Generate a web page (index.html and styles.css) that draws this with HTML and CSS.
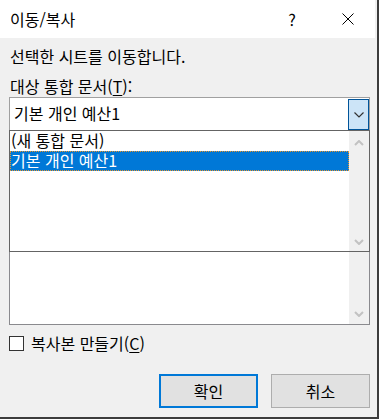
FILE: index.html
```html
<!DOCTYPE html>
<html lang="ko">
<head>
    <meta charset="UTF-8">
    <title>이동/복사</title>
    <link rel="stylesheet" href="styles.css">
</head>
<body>

    <div class="window">
        <div class="titlebar">
            <span class="title">이동/복사</span>
            <span class="help">?</span>
            <span class="close">
                <svg width="12" height="12" viewBox="0 0 12 12">
                    <path d="M0.5 0.5 L11.5 11.5 M11.5 0.5 L0.5 11.5" stroke="#000" stroke-width="1" fill="none"/>
                </svg>
            </span>
        </div>

        <div class="content">
            <p class="label">선택한 시트를 이동합니다.</p>
            <p class="label">대상 통합 문서(<u>T</u>):</p>

            <div class="combo">
                <span class="combo-text">기본 개인 예산1</span>
                <span class="combo-btn">
                    <svg width="10" height="6" viewBox="0 0 10 6">
                        <path d="M0.5 0.5 L5 5 L9.5 0.5" stroke="#333" stroke-width="1.2" fill="none"/>
                    </svg>
                </span>
            </div>

            <div class="listbox">
                <ul class="items">
                    <li>(새 통합 문서)</li>
                    <li class="selected">기본 개인 예산1</li>
                </ul>
                <div class="scrollbar">
                    <svg width="10" height="6" viewBox="0 0 10 6">
                        <path d="M1 5 L5 1 L9 5" stroke="#c2c2c2" stroke-width="2" fill="none"/>
                    </svg>
                    <svg width="10" height="6" viewBox="0 0 10 6">
                        <path d="M1 1 L5 5 L9 1" stroke="#c2c2c2" stroke-width="2" fill="none"/>
                    </svg>
                </div>
            </div>

            <div class="listbox lower">
                <ul class="items"></ul>
                <div class="scrollbar bottom-only">
                    <svg width="10" height="6" viewBox="0 0 10 6">
                        <path d="M1 1 L5 5 L9 1" stroke="#c2c2c2" stroke-width="2" fill="none"/>
                    </svg>
                </div>
            </div>

            <label class="check">
                <span class="box"></span>
                <span>복사본 만들기(<u>C</u>)</span>
            </label>

            <div class="buttons">
                <button class="default">확인</button>
                <button>취소</button>
            </div>
        </div>
    </div>

</body>
</html>
```

FILE: styles.css
```css
/* Basic reset */
* {
    margin: 0;
    padding: 0;
    box-sizing: border-box;
}

body {
    font-family: "Noto Sans CJK KR", "Noto Sans", sans-serif;
    font-size: 16px;
    color: #000;
    background: #3c3c3c;
    width: 379px;
    height: 419px;
    overflow: hidden;
}

.window {
    width: 377px;
    height: 417px;
    background-color: #f0f0f0;
}

/* Title bar */
.titlebar {
    height: 38px;
    background-color: #fff;
    display: flex;
    align-items: center;
    padding-left: 10px;
    margin-right: 2px;
}

.title {
    flex: 1;
    line-height: 20px;
}

.help {
    width: 30px;
    text-align: center;
    line-height: 20px;
}

.close {
    width: 46px;
    margin-left: 18px;
    margin-right: 4px;
    display: flex;
    justify-content: center;
}

/* Body */
.content {
    padding: 8px 8px 0 9px;
}

.label {
    line-height: 20px;
    padding-left: 1px;
    margin-bottom: 10px;
}

.label + .label {
    margin-bottom: 1px;
}

u {
    text-decoration-thickness: 1px;
    text-underline-offset: 2px;
}

.combo {
    width: 361px;
    height: 33px;
    border: 1px solid #a0a0a0;
    border-bottom: none;
    background-color: #fff;
    display: flex;
    align-items: stretch;
}

.combo-text {
    flex: 1;
    padding-left: 4px;
    line-height: 31px;
}

.combo-btn {
    width: 21px;
    margin: 1px 0 0 0;
    background-color: #cce4f7;
    border: 1px solid #005499;
    display: flex;
    align-items: center;
    justify-content: center;
}

.listbox {
    width: 361px;
    height: 122px;
    border: 1px solid #646464;
    background-color: #fff;
    display: flex;
}

.listbox.lower {
    height: 73px;
    border-top: none;
    border-color: #8a8a8e;
}

.items {
    list-style: none;
    flex: 1;
}

.items li {
    height: 20px;
    line-height: 19px;
    padding-left: 1px;
}

.items li.selected {
    background-color: #0078d7;
    color: #fff;
    outline: 1px dotted #e8942c;
    outline-offset: -1px;
}

.scrollbar {
    width: 20px;
    background-color: #f0f0f0;
    display: flex;
    flex-direction: column;
    justify-content: space-between;
    align-items: center;
    padding: 9px 0 6px;
}

.scrollbar.bottom-only {
    justify-content: flex-end;
    padding-bottom: 7px;
}

/* Checkbox */
.check {
    display: flex;
    align-items: center;
    gap: 7px;
    margin-top: 10px;
    line-height: 16px;
}

.box {
    width: 15px;
    height: 15px;
    border: 1px solid #333;
    background-color: #fff;
}

/* Buttons */
.buttons {
    display: flex;
    justify-content: flex-end;
    gap: 13px;
    margin-top: 23px;
    width: 361px;
}

button {
    width: 99px;
    height: 34px;
    font-family: inherit;
    font-size: 16px;
    color: #000;
    background-color: #e1e1e1;
    border: 1px solid #adadad;
}

button.default {
    border: 2px solid #0078d7;
}
```
